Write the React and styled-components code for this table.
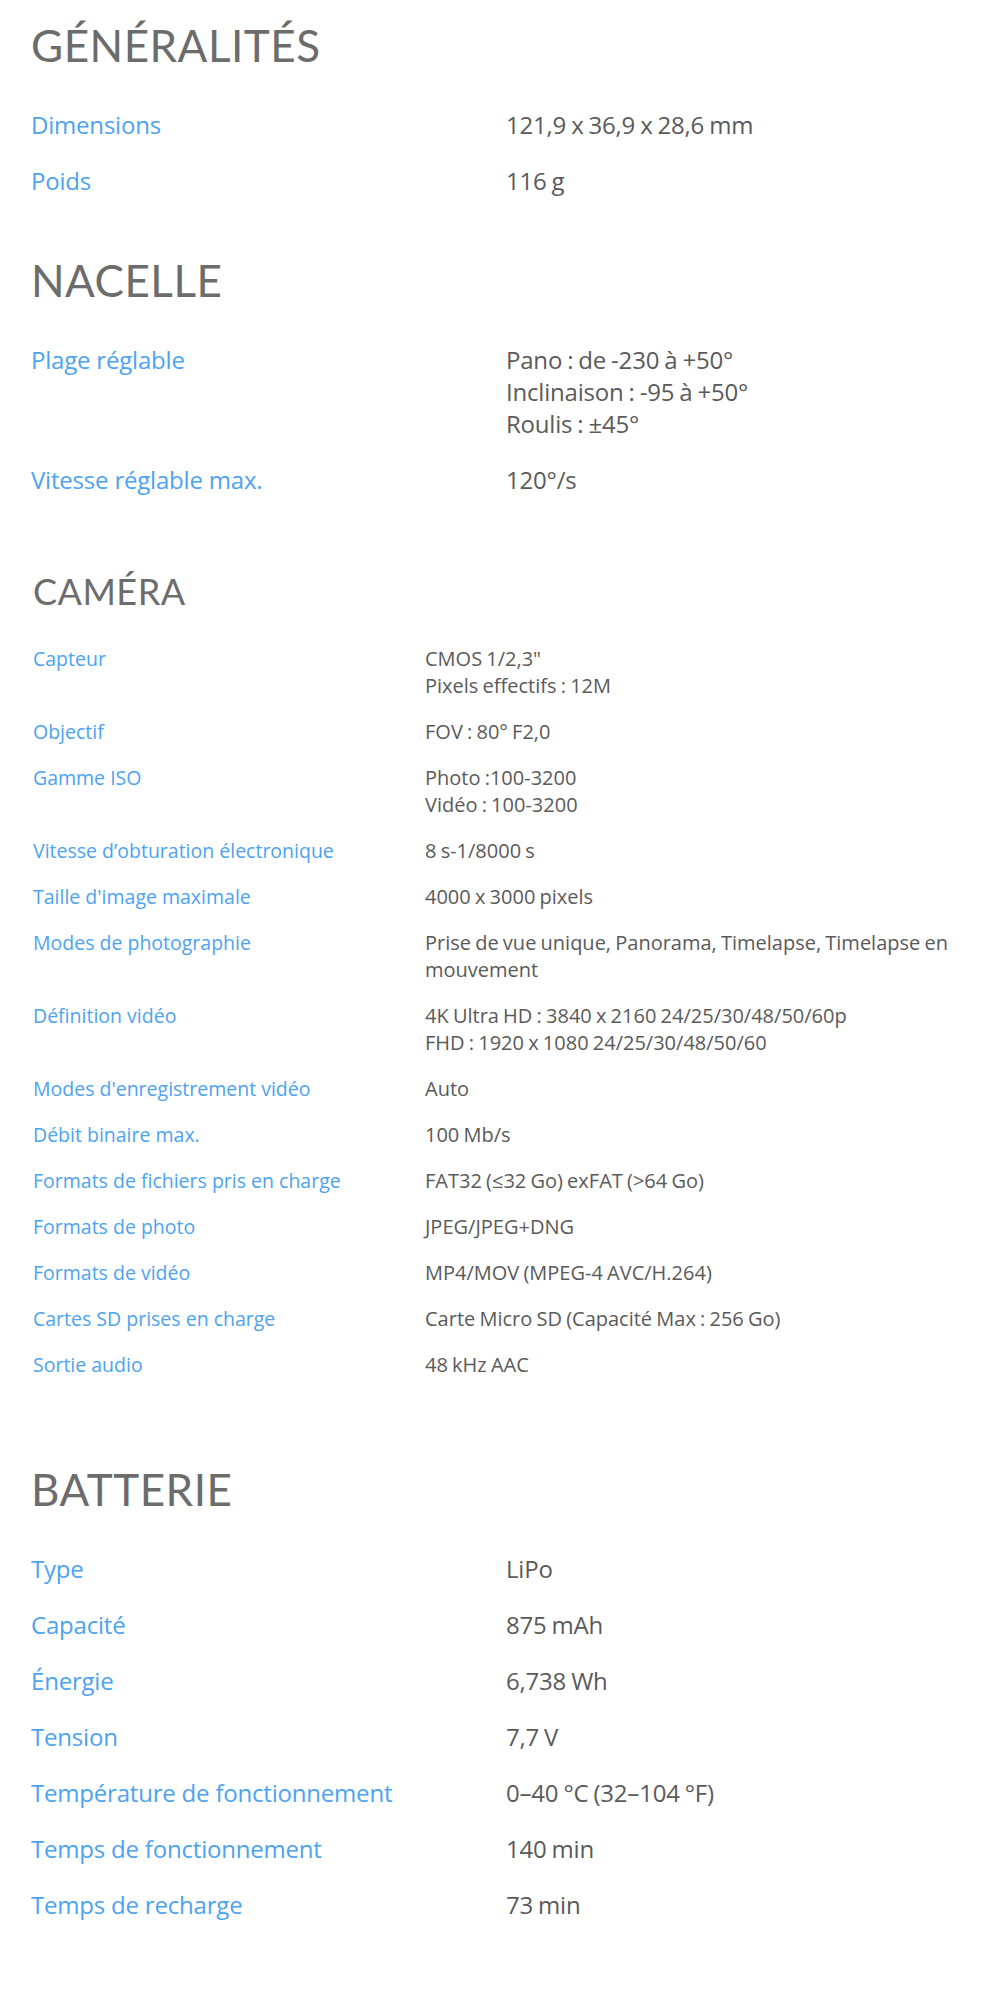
import styled, { createGlobalStyle } from 'styled-components';

const GlobalStyle = createGlobalStyle`
  body {
    margin: 0;
    background: #fff;
    font-family: "Open Sans", "Liberation Sans", sans-serif;
  }
`;

const Page = styled.main`
  width: 1000px;
  box-sizing: border-box;
  padding: 17px 15px 50px 31px;
`;

const Section = styled.section`
  margin-top: ${(p) => p.$top || 0}px;
  padding-left: ${(p) => (p.$small ? 2 : 0)}px;
`;

const Heading = styled.h2`
  margin: 0 0 ${(p) => (p.$small ? 30 : 36)}px;
  font-family: Lato, "Liberation Sans", sans-serif;
  font-weight: 400;
  font-size: ${(p) => (p.$small ? 36 : 44)}px;
  line-height: ${(p) => (p.$small ? 48 : 56)}px;
  letter-spacing: 0.5px;
  color: #6c6c6c;
`;

const Row = styled.div`
  display: grid;
  grid-template-columns: ${(p) => (p.$small ? '392px' : '475px')} minmax(0, 555px);
  padding-bottom: ${(p) => (p.$small ? 19 : 24)}px;
  line-height: ${(p) => (p.$small ? 27 : 32)}px;
`;

const Label = styled.div`
  color: #4da3ef;
  font-size: ${(p) => (p.$small ? 19.5 : 24)}px;
  letter-spacing: ${(p) => (p.$small ? 0 : -0.2)}px;
`;

const Value = styled.div`
  color: #5a5a5a;
  font-size: ${(p) => (p.$small ? 20 : 24)}px;
  letter-spacing: ${(p) => (p.$small ? 0 : -0.2)}px;
  word-spacing: -1px;
`;

const sections = [
  {
    title: 'GÉNÉRALITÉS',
    rows: [
      ['Dimensions', ['121,9 x 36,9 x 28,6 mm']],
      ['Poids', ['116 g']],
    ],
  },
  {
    title: 'NACELLE',
    top: 31,
    rows: [
      ['Plage réglable', ['Pano : de -230 à +50°', 'Inclinaison : -95 à +50°', 'Roulis : ±45°']],
      ['Vitesse réglable max.', ['120°/s']],
    ],
  },
  {
    title: 'CAMÉRA',
    top: 47,
    small: true,
    rows: [
      ['Capteur', ['CMOS 1/2,3"', 'Pixels effectifs : 12M']],
      ['Objectif', ['FOV : 80° F2,0']],
      ['Gamme ISO', ['Photo :100-3200', 'Vidéo : 100-3200']],
      ['Vitesse d’obturation électronique', ['8 s-1/8000 s']],
      ["Taille d'image maximale", ['4000 x 3000 pixels']],
      ['Modes de photographie', ['Prise de vue unique, Panorama, Timelapse, Timelapse en mouvement']],
      ['Définition vidéo', ['4K Ultra HD : 3840 x 2160 24/25/30/48/50/60p', 'FHD : 1920 x 1080 24/25/30/48/50/60']],
      ["Modes d'enregistrement vidéo", ['Auto']],
      ['Débit binaire max.', ['100 Mb/s']],
      ['Formats de fichiers pris en charge', ['FAT32 (≤32 Go) exFAT (>64 Go)']],
      ['Formats de photo', ['JPEG/JPEG+DNG']],
      ['Formats de vidéo', ['MP4/MOV (MPEG-4 AVC/H.264)']],
      ['Cartes SD prises en charge', ['Carte Micro SD (Capacité Max : 256 Go)']],
      ['Sortie audio', ['48 kHz AAC']],
    ],
  },
  {
    title: 'BATTERIE',
    top: 64,
    rows: [
      ['Type', ['LiPo']],
      ['Capacité', ['875 mAh']],
      ['Énergie', ['6,738 Wh']],
      ['Tension', ['7,7 V']],
      ['Température de fonctionnement', ['0–40 °C (32–104 °F)']],
      ['Temps de fonctionnement', ['140 min']],
      ['Temps de recharge', ['73 min']],
    ],
  },
];

export default function App() {
  return (
    <>
      <GlobalStyle />
      <Page>
        {sections.map((s) => (
          <Section key={s.title} $top={s.top} $small={s.small}>
            <Heading $small={s.small}>{s.title}</Heading>
            {s.rows.map(([label, lines]) => (
              <Row key={label} $small={s.small}>
                <Label $small={s.small}>{label}</Label>
                <Value $small={s.small}>
                  {lines.map((l) => (
                    <div key={l}>{l}</div>
                  ))}
                </Value>
              </Row>
            ))}
          </Section>
        ))}
      </Page>
    </>
  );
}
